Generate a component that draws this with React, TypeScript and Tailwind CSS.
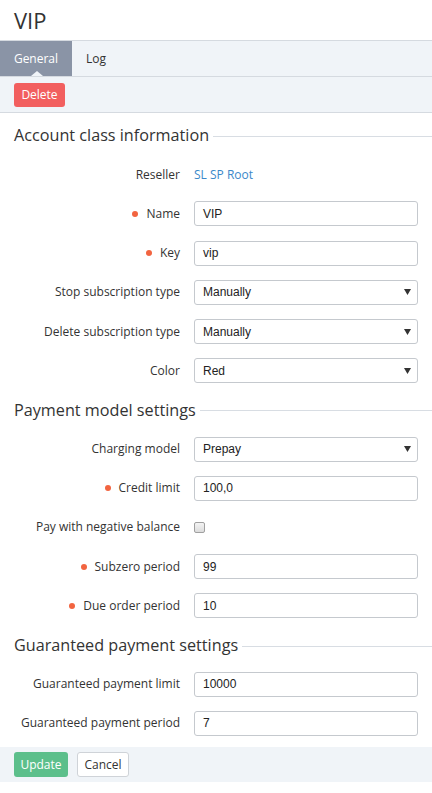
import React from 'react'

type Row =
  | { kind: 'heading'; text: string }
  | { kind: 'link'; label: string; value: string }
  | { kind: 'input'; label: string; value: string; required?: boolean }
  | { kind: 'select'; label: string; value: string }
  | { kind: 'check'; label: string }

const ROWS: Row[] = [
  { kind: 'heading', text: 'Account class information' },
  { kind: 'link', label: 'Reseller', value: 'SL SP Root' },
  { kind: 'input', label: 'Name', value: 'VIP', required: true },
  { kind: 'input', label: 'Key', value: 'vip', required: true },
  { kind: 'select', label: 'Stop subscription type', value: 'Manually' },
  { kind: 'select', label: 'Delete subscription type', value: 'Manually' },
  { kind: 'select', label: 'Color', value: 'Red' },
  { kind: 'heading', text: 'Payment model settings' },
  { kind: 'select', label: 'Charging model', value: 'Prepay' },
  { kind: 'input', label: 'Credit limit', value: '100,0', required: true },
  { kind: 'check', label: 'Pay with negative balance' },
  { kind: 'input', label: 'Subzero period', value: '99', required: true },
  { kind: 'input', label: 'Due order period', value: '10', required: true },
  { kind: 'heading', text: 'Guaranteed payment settings' },
  { kind: 'input', label: 'Guaranteed payment limit', value: '10000' },
  { kind: 'input', label: 'Guaranteed payment period', value: '7' },
]

const sans = "font-['Open_Sans','Noto_Sans',sans-serif]"
const field = "font-['Liberation_Sans',Arial,sans-serif]"

function Label({ text, required }: { text: string; required?: boolean }) {
  return (
    <div className="w-[166px] shrink-0 flex items-center justify-end gap-[8px] text-[12px] text-[#333] whitespace-nowrap">
      {required && <span className="w-[6px] h-[6px] rounded-full bg-[#f26440]" />}
      <span>{text}</span>
    </div>
  )
}

function FormRow({ row }: { row: Row }) {
  if (row.kind === 'heading') {
    return (
      <div className="h-[39.2px] flex items-center pl-[14px]">
        <span className="text-[16.2px] text-[#333] whitespace-nowrap">{row.text}</span>
        <div className="flex-1 h-px bg-[#d8dde3] ml-[4px] mt-[2px]" />
      </div>
    )
  }
  return (
    <div className="h-[39.2px] flex items-center pl-[14px] pr-[14px] gap-[14px]">
      <Label text={row.label} required={row.kind === 'input' ? row.required : false} />
      {row.kind === 'link' && (
        <span className="text-[12px] text-[#3b88c9]">{row.value}</span>
      )}
      {row.kind === 'input' && (
        <div
          className={`flex-1 h-[25px] border border-[#c5c9ce] rounded-[3px] bg-white flex items-center pl-[8px] text-[12px] text-[#222] ${field}`}
        >
          {row.value}
        </div>
      )}
      {row.kind === 'select' && (
        <div
          className={`flex-1 h-[25px] border border-[#c5c9ce] rounded-[3px] bg-white flex items-center justify-between pl-[8px] pr-[6px] text-[12px] text-[#222] ${field}`}
        >
          <span>{row.value}</span>
          <svg width="7" height="6" viewBox="0 0 7 6">
            <path d="M0 0h7L3.5 6z" fill="#333" />
          </svg>
        </div>
      )}
      {row.kind === 'check' && (
        <div className="w-[11px] h-[11px] rounded-[2px] border border-[#a0a0a0] bg-gradient-to-b from-[#f4f4f4] to-[#dcdcdc]" />
      )}
    </div>
  )
}

export default function App() {
  return (
    <div className={`w-[432px] h-[793px] bg-white ${sans}`}>
      {/* Title */}
      <div className="h-[40px] flex items-center pl-[14px]">
        <h1 className="text-[22px] text-[#333] leading-none">VIP</h1>
      </div>

      {/* Tabs */}
      <div className="h-[37px] border-y border-[#d5dae0] bg-[#f0f4f8] flex text-[12px]">
        <div className="relative w-[72px] bg-[#8a94a6] text-white flex items-center justify-center">
          General
          <span className="absolute bottom-0 left-[31px] w-0 h-0 border-x-[6px] border-x-transparent border-b-[5px] border-b-[#f0f4f8]" />
        </div>
        <div className="px-[14px] flex items-center text-[#333]">Log</div>
      </div>

      {/* Toolbar */}
      <div className="h-[36px] border-b border-[#d5dae0] bg-[#f0f4f8] flex items-center pl-[14px]">
        <button className="h-[24px] w-[51px] rounded-[3px] bg-[#f25f5f] text-white text-[12px]">
          Delete
        </button>
      </div>

      {/* Form */}
      <div className="pt-[3px]">
        {ROWS.map((row, i) => (
          <FormRow key={i} row={row} />
        ))}
      </div>

      {/* Footer */}
      <div className="mt-[4px] h-[35px] bg-[#f0f4f8] flex items-center pl-[14px] gap-[9px]">
        <button className="h-[25px] w-[54px] rounded-[3px] bg-[#5cbf8b] text-white text-[12px]">
          Update
        </button>
        <button className="h-[25px] w-[52px] rounded-[3px] bg-white border border-[#cfd3d8] text-[#333] text-[12px]">
          Cancel
        </button>
      </div>
    </div>
  )
}
